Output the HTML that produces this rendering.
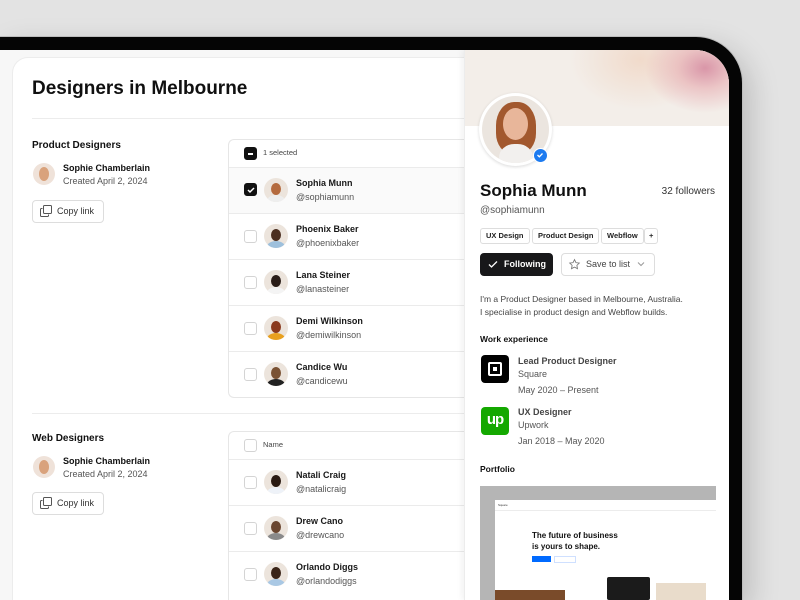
<!DOCTYPE html>
<html style="width:800px;height:600px;overflow:hidden"><head><meta charset="utf-8"><style>
*{box-sizing:border-box;margin:0;padding:0}
body{width:800px;height:600px;overflow:hidden;background:#e3e3e3;font-family:"Liberation Sans",sans-serif;position:relative;color:#101010}
.abs{position:absolute}
.bezel{left:0;top:37px;width:742px;height:563px;background:#050505;border-radius:0 46px 0 0;box-shadow:0 0 0 1px #bdbdbd, 8px 10px 30px rgba(0,0,0,.18)}
.screen{left:0;top:50px;width:729px;height:550px;background:#f7f7f7;border-radius:0 34px 0 0;overflow:hidden}
.card{left:12px;top:7px;width:460px;height:543px;background:#fff;border:1px solid #ececec;border-bottom:0;border-right:0;border-radius:16px 0 0 0}
.t{position:absolute;white-space:nowrap}
.hr{position:absolute;height:1px;background:#ececec}
.tbl{position:absolute;left:228px;width:240px;border:1px solid #e6e6e6;border-right:0;border-radius:6px 0 0 6px;background:#fff;overflow:hidden}
.row{position:relative;height:46px;border-top:1px solid #ebebeb}
.head{height:27px}
.cb{position:absolute;left:15px;width:13px;height:13px;border:1px solid #d4d4d4;border-radius:3px;background:#fff}
.cb.on{background:#111;border-color:#111}
.av{position:absolute;left:35px;top:10px;width:24px;height:24px;border-radius:50%;overflow:hidden;background:#ece4dc}
.av i{position:absolute;left:7px;top:5px;width:10px;height:12px;border-radius:50%}
.av b{position:absolute;left:3px;top:17px;width:18px;height:12px;border-radius:50%}
.nm{position:absolute;left:67px;top:10px;font-size:9px;font-weight:bold;color:#181818}
.hd{position:absolute;left:67px;top:24px;font-size:9px;color:#555}
.btn{position:absolute;border:1px solid #ddd;border-radius:4px;background:#fff;font-size:9px;color:#333}
.tag{position:absolute;height:16px;border:1px solid #ddd;border-radius:3px;font-size:7.5px;font-weight:bold;line-height:14px;padding:0 5px;color:#222}
</style></head><body>
<div class="abs bezel"></div>
<div class="abs screen">
 <div class="abs card"></div>
 <div class="t" style="left:32px;top:28px;font-size:19px;font-weight:bold">Designers in Melbourne</div>
 <div class="hr" style="left:32px;top:68px;width:440px"></div>
 <div class="hr" style="left:32px;top:363px;width:440px"></div>

 <div class="t" style="left:32px;top:90px;font-size:10px;font-weight:bold">Product Designers</div>
 <div class="abs" style="left:33px;top:113px;width:22px;height:22px;border-radius:50%;background:#efe2d9;overflow:hidden"><div class="abs" style="left:6px;top:4px;width:10px;height:14px;border-radius:50%;background:#d9a27c"></div></div>
 <div class="t" style="left:63px;top:113px;font-size:9px;font-weight:bold">Sophie Chamberlain</div>
 <div class="t" style="left:63px;top:126px;font-size:9px;color:#555">Created April 2, 2024</div>
 <div class="btn" style="left:32px;top:150px;width:72px;height:23px;line-height:21px;padding-left:24px">Copy link</div>
 <svg class="abs" style="left:40px;top:155px" width="12" height="12" viewBox="0 0 12 12" fill="none" stroke="#555" stroke-width="1"><rect x="3.5" y="0.5" width="8" height="8" rx="1"/><path d="M2.5 3.5h-1a1 1 0 0 0-1 1v6a1 1 0 0 0 1 1h6a1 1 0 0 0 1-1v-1"/></svg>

 <div class="t" style="left:32px;top:383px;font-size:10px;font-weight:bold">Web Designers</div>
 <div class="abs" style="left:33px;top:406px;width:22px;height:22px;border-radius:50%;background:#efe2d9;overflow:hidden"><div class="abs" style="left:6px;top:4px;width:10px;height:14px;border-radius:50%;background:#d9a27c"></div></div>
 <div class="t" style="left:63px;top:406px;font-size:9px;font-weight:bold">Sophie Chamberlain</div>
 <div class="t" style="left:63px;top:419px;font-size:9px;color:#555">Created April 2, 2024</div>
 <div class="btn" style="left:32px;top:442px;width:72px;height:23px;line-height:21px;padding-left:24px">Copy link</div>
 <svg class="abs" style="left:40px;top:447px" width="12" height="12" viewBox="0 0 12 12" fill="none" stroke="#555" stroke-width="1"><rect x="3.5" y="0.5" width="8" height="8" rx="1"/><path d="M2.5 3.5h-1a1 1 0 0 0-1 1v6a1 1 0 0 0 1 1h6a1 1 0 0 0 1-1v-1"/></svg>

 <div class="tbl" style="top:89px">
  <div class="row head" style="border-top:0"><div class="cb on" style="top:7px"><div class="abs" style="left:3px;top:5px;width:5px;height:1.5px;background:#fff"></div></div><div class="t" style="left:34px;top:8px;font-size:7.5px;color:#444">1 selected</div></div>
  <div class="row" style="background:#fafafa"><div class="cb on" style="top:15px"><svg class="abs" style="left:1px;top:1px" width="10" height="10" viewBox="0 0 10 10"><path d="M2 5l2 2 4-4" stroke="#fff" stroke-width="1.5" fill="none"/></svg></div><div class="av"><i style="background:#b46a3e"></i><b style="background:#eee"></b></div><div class="nm">Sophia Munn</div><div class="hd">@sophiamunn</div></div>
  <div class="row"><div class="cb" style="top:16px"></div><div class="av"><i style="background:#4a2e20"></i><b style="background:#9ec0dc"></b></div><div class="nm">Phoenix Baker</div><div class="hd">@phoenixbaker</div></div>
  <div class="row"><div class="cb" style="top:16px"></div><div class="av"><i style="background:#2a1d18"></i><b style="background:#f4f4f4"></b></div><div class="nm">Lana Steiner</div><div class="hd">@lanasteiner</div></div>
  <div class="row"><div class="cb" style="top:16px"></div><div class="av"><i style="background:#8a3a1e"></i><b style="background:#e8a020"></b></div><div class="nm">Demi Wilkinson</div><div class="hd">@demiwilkinson</div></div>
  <div class="row"><div class="cb" style="top:16px"></div><div class="av"><i style="background:#7a5234"></i><b style="background:#222"></b></div><div class="nm">Candice Wu</div><div class="hd">@candicewu</div></div>
 </div>

 <div class="tbl" style="top:381px;height:169px;border-bottom:0;border-radius:6px 0 0 0">
  <div class="row head" style="border-top:0"><div class="cb" style="top:7px"></div><div class="t" style="left:34px;top:8px;font-size:7.5px;color:#444">Name</div></div>
  <div class="row"><div class="cb" style="top:16px"></div><div class="av"><i style="background:#2a1a12"></i><b style="background:#eef2f8"></b></div><div class="nm">Natali Craig</div><div class="hd">@natalicraig</div></div>
  <div class="row"><div class="cb" style="top:16px"></div><div class="av"><i style="background:#6a4630"></i><b style="background:#8a8a8a"></b></div><div class="nm">Drew Cano</div><div class="hd">@drewcano</div></div>
  <div class="row"><div class="cb" style="top:16px"></div><div class="av"><i style="background:#3a2418"></i><b style="background:#a9c8e4"></b></div><div class="nm">Orlando Diggs</div><div class="hd">@orlandodiggs</div></div>
 </div>

 <div class="abs" style="left:464px;top:0;width:265px;height:550px;background:#fff;box-shadow:-2px 0 6px rgba(0,0,0,.06);border-left:1px solid #ececec;overflow:hidden">
  <div class="abs" style="left:0;top:0;width:265px;height:76px;background:radial-gradient(ellipse 60px 45px at 240px 18px,#d996a8 0%,rgba(230,170,175,.6) 45%,rgba(243,238,233,0) 100%),radial-gradient(ellipse 70px 50px at 175px 10px,rgba(240,210,190,.7),rgba(243,238,233,0)),#f3eee9"></div>
  <div class="abs" style="left:14px;top:43px;width:73px;height:73px;border-radius:50%;background:#fff;box-shadow:0 1px 3px rgba(0,0,0,.15)">
   <div class="abs" style="left:3px;top:3px;width:67px;height:67px;border-radius:50%;background:#ebe5df;overflow:hidden">
    <div class="abs" style="left:14px;top:6px;width:40px;height:52px;border-radius:45% 45% 40% 40%;background:#a2582e"></div>
    <div class="abs" style="left:21px;top:12px;width:25px;height:32px;border-radius:50%;background:#e8b69a"></div>
    <div class="abs" style="left:17px;top:48px;width:34px;height:30px;border-radius:45%;background:#f2f0ee"></div>
   </div>
  </div>
  <div class="abs" style="left:68px;top:98px;width:15px;height:15px;border-radius:50%;background:#1d7bf0;border:1.5px solid #fff"><svg class="abs" style="left:2px;top:2px" width="8" height="8" viewBox="0 0 8 8"><path d="M1.5 4l1.8 1.8L6.5 2.5" stroke="#fff" stroke-width="1.3" fill="none"/></svg></div>
  <div class="t" style="left:15px;top:131px;font-size:17px;font-weight:bold">Sophia Munn</div>
  <div class="t" style="right:14px;top:136px;font-size:10px;color:#333">32 followers</div>
  <div class="t" style="left:15px;top:155px;font-size:10px;color:#555">@sophiamunn</div>
  <div class="tag" style="left:15px;top:178px">UX Design</div>
  <div class="tag" style="left:67px;top:178px">Product Design</div>
  <div class="tag" style="left:136px;top:178px">Webflow</div>
  <div class="tag" style="left:179px;top:178px;padding:0 4px">+</div>
  <div class="abs" style="left:15px;top:203px;width:73px;height:23px;border-radius:4px;background:#18181a;color:#fff;font-size:9px;font-weight:bold;line-height:23px;padding-left:24px">Following</div>
  <svg class="abs" style="left:22px;top:208px" width="12" height="12" viewBox="0 0 12 12"><path d="M2 6.5l2.5 2.5L10 3.5" stroke="#fff" stroke-width="1.3" fill="none"/></svg>
  <div class="btn" style="left:96px;top:203px;width:94px;height:23px;line-height:21px;padding-left:24px;color:#444">Save to list</div>
  <svg class="abs" style="left:103px;top:208px" width="13" height="13" viewBox="0 0 24 24"><path d="M12 3l2.7 5.6 6.1.8-4.4 4.2 1.1 6.1L12 16.8 6.5 19.7l1.1-6.1L3.2 9.4l6.1-.8z" stroke="#777" stroke-width="1.6" fill="none"/></svg>
  <svg class="abs" style="left:172px;top:211px" width="8" height="6" viewBox="0 0 8 6"><path d="M1 1.5l3 3 3-3" stroke="#999" fill="none"/></svg>
  <div class="t" style="left:15px;top:243px;font-size:8.5px;color:#444;line-height:13px">I'm a Product Designer based in Melbourne, Australia.<br>I specialise in product design and Webflow builds.</div>
  <div class="t" style="left:15px;top:284px;font-size:8.5px;font-weight:bold">Work experience</div>
  <div class="abs" style="left:16px;top:305px;width:28px;height:28px;border-radius:4px;background:#000"><div class="abs" style="left:7px;top:7px;width:14px;height:14px;border:2.5px solid #fff;border-radius:2px"><div class="abs" style="left:2.5px;top:2.5px;width:4px;height:4px;background:#fff"></div></div></div>
  <div class="t" style="left:53px;top:306px;font-size:9px;font-weight:bold;color:#444">Lead Product Designer</div>
  <div class="t" style="left:53px;top:319px;font-size:9px;color:#555">Square</div>
  <div class="t" style="left:53px;top:335px;font-size:9px;color:#555">May 2020 – Present</div>
  <div class="abs" style="left:16px;top:357px;width:28px;height:28px;border-radius:4px;background:#14a800;color:#fff;font-weight:bold;font-size:15px;text-align:center;line-height:26px;letter-spacing:-1px">up</div>
  <div class="t" style="left:53px;top:357px;font-size:9px;font-weight:bold;color:#444">UX Designer</div>
  <div class="t" style="left:53px;top:370px;font-size:9px;color:#555">Upwork</div>
  <div class="t" style="left:53px;top:386px;font-size:9px;color:#555">Jan 2018 – May 2020</div>
  <div class="t" style="left:15px;top:414px;font-size:8.5px;font-weight:bold">Portfolio</div>
  <div class="abs" style="left:15px;top:436px;width:236px;height:114px;background:#b5b5b5;overflow:hidden">
   <div class="abs" style="left:15px;top:14px;width:221px;height:100px;background:#fff;overflow:hidden">
    <div class="hr" style="left:0;top:10px;width:221px"></div>
    <div class="t" style="left:3px;top:3px;font-size:3px;color:#333">Square</div>
    <div class="t" style="left:37px;top:30px;font-size:8px;font-weight:bold;line-height:11px;color:#111">The future of business<br>is yours to shape.</div>
    <div class="abs" style="left:37px;top:56px;width:19px;height:6px;background:#006aff"></div>
    <div class="abs" style="left:59px;top:56px;width:22px;height:7px;border:1px solid #cfe0ff"></div>
    <div class="abs" style="left:112px;top:77px;width:43px;height:23px;background:#1b1b1b;border-radius:2px"></div>
    <div class="abs" style="left:161px;top:83px;width:50px;height:17px;background:#e9dccb"></div>
    <div class="abs" style="left:0;top:90px;width:70px;height:10px;background:#7a4b2a"></div>
   </div>
  </div>
 </div>
</div>
</body></html>
